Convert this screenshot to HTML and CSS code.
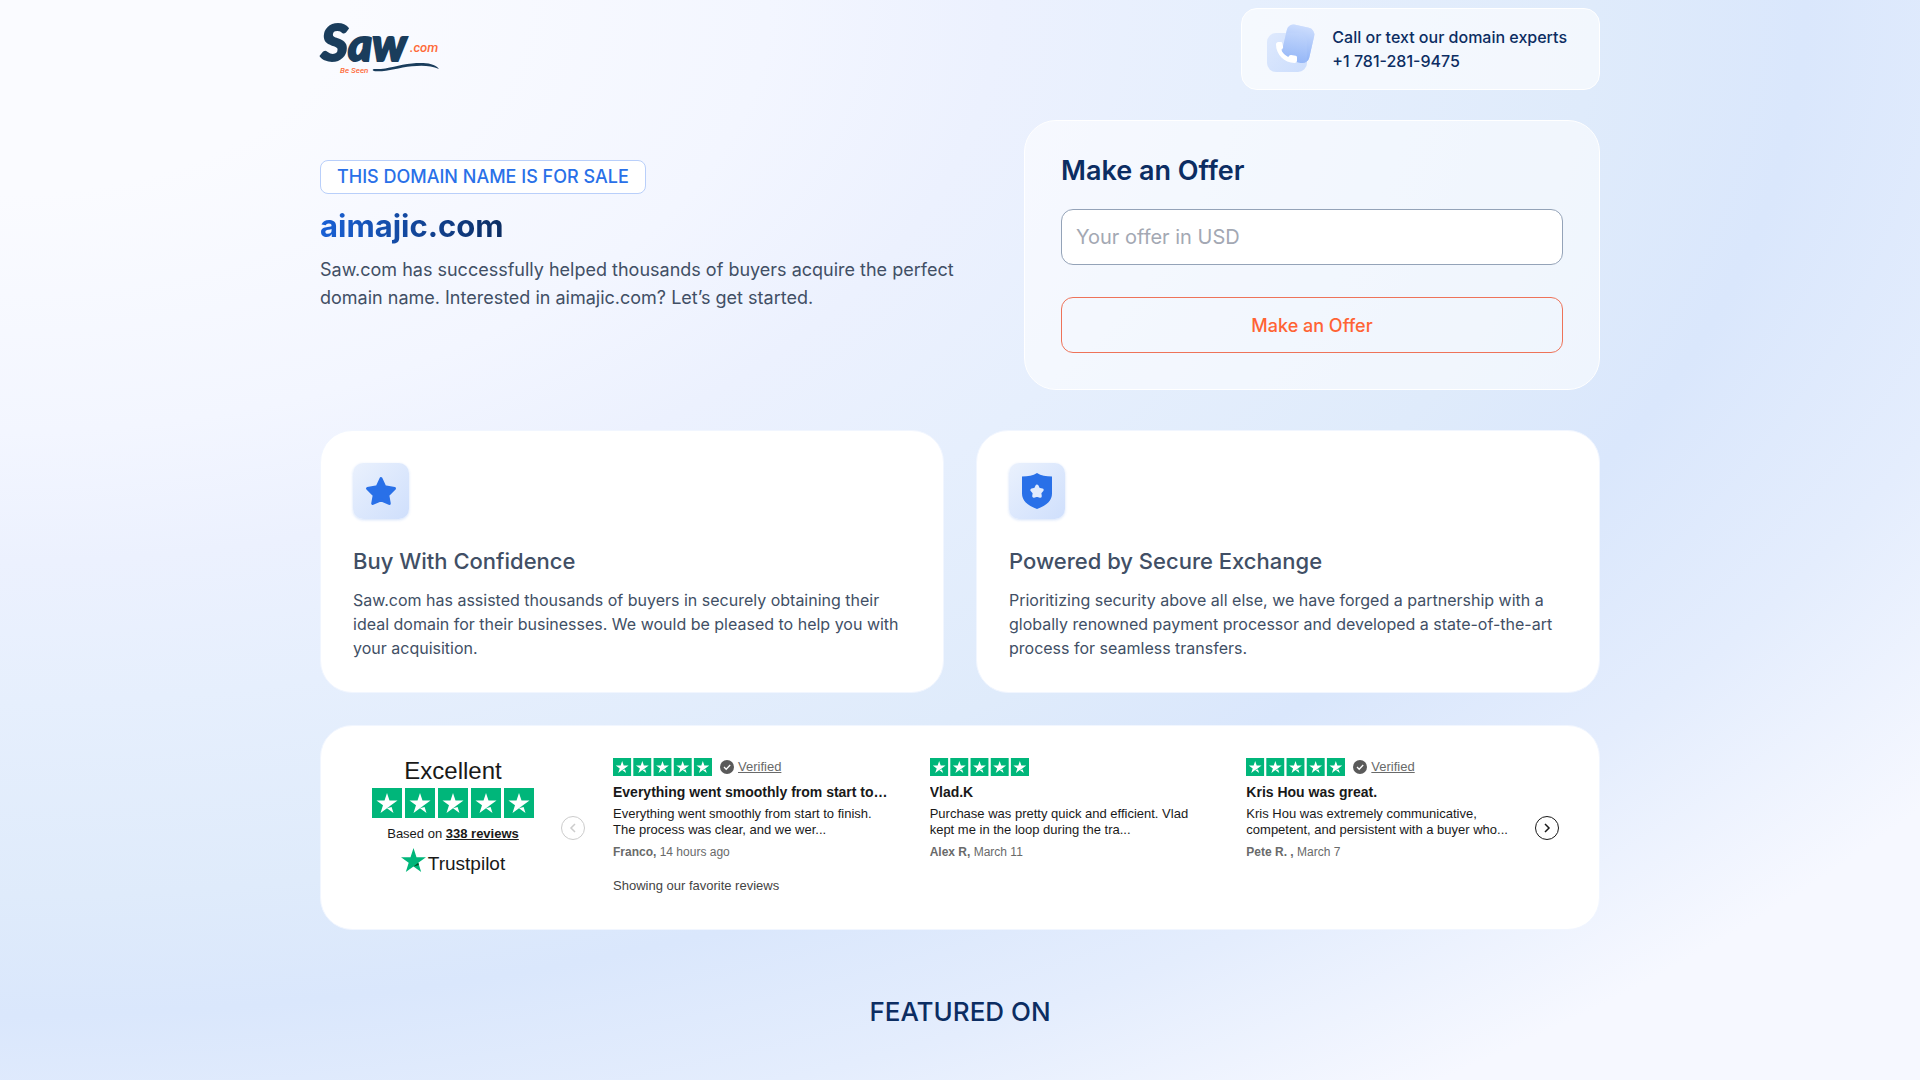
FILE: index.html
```html
<!DOCTYPE html>
<html lang="en">

<head>
    <meta charset="UTF-8">
    <meta name="viewport" content="width=device-width, initial-scale=1">
    <title>aimajic.com is for sale | Saw.com</title>
    <link rel="stylesheet" href="styles.css">
</head>

<body>
    <!-- shared shapes -->
    <svg class="sprite" aria-hidden="true">
        <symbol id="tp-star" viewBox="0 0 30 30">
            <rect width="30" height="30" fill="#00b67a" />
            <path fill="#fff" d="M15 20.2l4.6-1.2 1.9 5.9zM25.5 12.6h-8L15 5l-2.5 7.6h-8l6.5 4.7-2.5 7.6 6.5-4.7 4-2.9z" />
        </symbol>
        <symbol id="tp-stars" viewBox="0 0 162 30">
            <use href="#tp-star" width="30" height="30" />
            <use href="#tp-star" x="33" width="30" height="30" />
            <use href="#tp-star" x="66" width="30" height="30" />
            <use href="#tp-star" x="99" width="30" height="30" />
            <use href="#tp-star" x="132" width="30" height="30" />
        </symbol>
        <symbol id="verified" viewBox="0 0 14 14">
            <circle cx="7" cy="7" r="7" fill="#5a5a5a" />
            <path d="M4 7l2.2 2.2L10.2 5" fill="none" stroke="#fff" stroke-width="1.3" />
        </symbol>
    </svg>

    <div class="container">
        <header class="header">
            <a href="#" class="logo" aria-label="Saw.com">
                <svg width="120" height="52" viewBox="0 0 120 52">
                    <text x="1" y="38" class="logo-saw"><tspan class="logo-s">S</tspan>aw</text>
                    <text x="90" y="29" class="logo-com">.com</text>
                    <text x="20" y="50" class="logo-tag">Be Seen</text>
                    <path fill="#1a3d5c" d="M54 46c14 .6 24-4.700 38-5.600 11-.6 22-.8 27 5.600-8-3.600-17-3.800-27-2.800-14 1.400-25 5.800-37 5-2.500-.2-3-1.800-1-2.200z" />
                </svg>
            </a>
            <a href="tel:+17812819475" class="phone-card">
                <svg width="56" height="56" viewBox="0 0 56 56" aria-hidden="true">
                    <defs>
                        <linearGradient id="backTile" x1="0" y1="0" x2="0" y2="1">
                            <stop offset="0" stop-color="#cbdcfd" />
                            <stop offset="1" stop-color="#8db1f6" />
                        </linearGradient>
                        <linearGradient id="frontTile" x1="0" y1="0" x2="1" y2="1">
                            <stop offset="0" stop-color="#d5e3fd" stop-opacity=".7" />
                            <stop offset="1" stop-color="#b2ccfb" stop-opacity=".6" />
                        </linearGradient>
                    </defs>
                    <rect x="22" y="5" width="28" height="36" rx="7" fill="url(#backTile)" transform="rotate(13 37 23)" />
                    <rect x="5" y="12" width="40" height="39" rx="9" fill="url(#frontTile)" />
                    <path fill="url(#backTile)" opacity=".7" transform="rotate(13 37 23)" d="M22 12a7 7 0 017-7h14a7 7 0 017 7v22a7 7 0 01-7 7H29a7 7 0 01-7-7z" />
                    <path fill="#fff" d="M14 23.500c0-1.500 1-2.500 2.400-2.500h2.300c.8 0 1.400.5 1.600 1.300l.8 3.600c.1.700-.1 1.300-.6 1.700l-1.500 1.200c1.700 3.200 4 5.500 7.200 7.200l1.200-1.500c.4-.5 1-.7 1.700-.6l4.600.9c.8.200 1.300.8 1.300 1.600v3.200c0 1.400-1 2.400-2.500 2.400C22.500 42 14 33.500 14 23.500z" />
                </svg>
                <span>Call or text our domain experts<br>+1 781-281-9475</span>
            </a>
        </header>

        <section class="hero">
            <div class="hero-text">
                <span class="badge">THIS DOMAIN NAME IS FOR SALE</span>
                <h1><span>aimajic.com</span></h1>
                <p>Saw.com has successfully helped thousands of buyers acquire the perfect domain name. Interested in aimajic.com? Let’s get started.</p>
            </div>
            <form class="offer-card">
                <h2><label for="offer">Make an Offer</label></h2>
                <input type="text" id="offer" placeholder="Your offer in USD">
                <button type="button">Make an Offer</button>
            </form>
        </section>

        <section class="features">
            <div class="card">
                <div class="icon-tile">
                    <svg width="56" height="56" viewBox="0 0 56 56" aria-hidden="true">
                        <path fill="#2970e8" stroke="#2970e8" stroke-width="3" stroke-linejoin="round" d="M28 15.500l3.700 8.200 9.800 1.800-6.700 6.800 1.500 8.200-8.300-3.700-8.300 3.700 1.500-8.200-6.700-6.800 9.800-1.800z" />
                    </svg>
                </div>
                <h3>Buy With Confidence</h3>
                <p>Saw.com has assisted thousands of buyers in securely obtaining their ideal domain for their businesses. We would be pleased to help you with your acquisition.</p>
            </div>
            <div class="card">
                <div class="icon-tile">
                    <svg width="56" height="56" viewBox="0 0 56 56" aria-hidden="true">
                        <path fill="#2970e8" d="M28 10c4 2.700 9 3.500 15 3.500v17c0 7-5 11.500-15 15.500-10-4-15-8.500-15-15.500v-17c6 0 11-.8 15-3.500z" />
                        <path fill="#e1ebfd" stroke="#e1ebfd" stroke-width="3" stroke-linejoin="round" d="M28 23l1.600 3.200 3.600.8-2.400 2.700.5 3.500-3.300-.9-3.300.9.5-3.500-2.400-2.700 3.600-.8z" />
                    </svg>
                </div>
                <h3>Powered by Secure Exchange</h3>
                <p>Prioritizing security above all else, we have forged a partnership with a globally renowned payment processor and developed a state-of-the-art process for seamless transfers.</p>
            </div>
        </section>

        <section class="card reviews">
            <div class="summary">
                <div class="rating">Excellent</div>
                <svg class="stars-big" width="162" height="30" role="img" aria-label="5 stars"><use href="#tp-stars" /></svg>
                <div class="based-on">Based on <a href="#">338 reviews</a></div>
                <a href="#" class="trustpilot">
                    <svg width="25" height="24" viewBox="0 0 25 24" aria-hidden="true">
                        <path fill="#00b67a" d="M25 9.200h-9.500L12.500 0l-3 9.200H0l7.700 5.600L4.800 24l7.700-5.600 7.700 5.600-2.900-9.200z" />
                        <path fill="#005128" d="M17.900 16.900l-.6-2.100-4.800 3.600z" />
                    </svg>
                    Trustpilot
                </a>
            </div>
            <button type="button" class="arrow prev" aria-label="Previous reviews" disabled>
                <svg width="24" height="24" viewBox="0 0 24 24"><path d="M14 8l-4 4 4 4" /></svg>
            </button>
            <div class="review-list">
                <article class="review">
                    <div class="review-top">
                        <svg width="99" height="18" viewBox="0 0 162 30" preserveAspectRatio="none" role="img" aria-label="5 stars"><use href="#tp-stars" width="162" height="30" /></svg>
                        <svg class="check" width="14" height="14"><use href="#verified" /></svg>
                        <a href="#">Verified</a>
                    </div>
                    <h4>Everything went smoothly from start to…</h4>
                    <p>Everything went smoothly from start to finish. The process was clear, and we wer...</p>
                    <div class="author"><b>Franco,</b> 14 hours ago</div>
                </article>
                <article class="review">
                    <div class="review-top">
                        <svg width="99" height="18" viewBox="0 0 162 30" preserveAspectRatio="none" role="img" aria-label="5 stars"><use href="#tp-stars" width="162" height="30" /></svg>
                    </div>
                    <h4>Vlad.K</h4>
                    <p>Purchase was pretty quick and efficient. Vlad kept me in the loop during the tra...</p>
                    <div class="author"><b>Alex R,</b> March 11</div>
                </article>
                <article class="review">
                    <div class="review-top">
                        <svg width="99" height="18" viewBox="0 0 162 30" preserveAspectRatio="none" role="img" aria-label="5 stars"><use href="#tp-stars" width="162" height="30" /></svg>
                        <svg class="check" width="14" height="14"><use href="#verified" /></svg>
                        <a href="#">Verified</a>
                    </div>
                    <h4>Kris Hou was great.</h4>
                    <p>Kris Hou was extremely communicative, competent, and persistent with a buyer who...</p>
                    <div class="author"><b>Pete R. ,</b> March 7</div>
                </article>
                <div class="showing">Showing our favorite reviews</div>
            </div>
            <button type="button" class="arrow" aria-label="Next reviews">
                <svg width="24" height="24" viewBox="0 0 24 24"><path d="M10 8l4 4-4 4" /></svg>
            </button>
        </section>

        <h2 class="featured">FEATURED ON</h2>
    </div>
</body>

</html>
```

FILE: styles.css
```css
* {
    box-sizing: border-box;
}

body {
    margin: 0;
    min-height: 100vh;
    font-family: Inter, sans-serif;
    font-size: 16px;
    line-height: 24px;
    color: #414f65;
    background: radial-gradient(ellipse 100vw 100vh at 0 0, #fafbff 18%, #f3f6ff 40%, #ecf1fe 52%, #e6effd 65%, #dfebfb 83%, #dae7fc 94%, #e4edfd 108%, #f6f8ff 125%);
}

h1, h2, h3, h4, p {
    margin: 0;
}

.sprite {
    position: absolute;
    width: 0;
    height: 0;
}

.container {
    max-width: 1312px;
    margin: 0 auto;
    padding: 8px 16px 48px;
}

.header {
    display: flex;
    align-items: center;
    justify-content: space-between;
    margin-bottom: 30px;
}

.logo svg {
    display: block;
    overflow: visible;
}

.logo-saw {
    font: italic 900 46px Lato, sans-serif;
    fill: #1a3d5c;
    stroke: #1a3d5c;
    stroke-width: 2px;
}

.logo-s {
    font-size: 52px;
}

.logo-com {
    font: italic 500 13px Roboto, sans-serif;
    fill: #ff6a39;
}

.logo-tag {
    font: italic 500 8px Roboto, sans-serif;
    fill: #ff6a39;
}

.phone-card {
    display: flex;
    align-items: center;
    gap: 14px;
    padding: 12px 32px 12px 20px;
    border: 1px solid #fff;
    border-radius: 16px;
    background: rgba(255, 255, 255, 0.6);
    color: #0c2d62;
    font-weight: 500;
    text-decoration: none;
}

.hero {
    display: grid;
    grid-template-columns: 10fr 9fr;
    gap: 64px;
    margin-bottom: 40px;
}

.hero-text {
    padding-top: 40px;
    font-size: 18px;
    line-height: 28px;
}

.badge {
    display: inline-block;
    padding: 4px 16px;
    border: 1px solid #b9cffa;
    border-radius: 8px;
    background: #fff;
    color: #2970e8;
    font-weight: 500;
    line-height: 24px;
}

.hero-text h1 {
    margin: 12px 0 10px;
    font-size: 31px;
    line-height: 40px;
}

.hero-text h1 span {
    background: linear-gradient(90deg, #1a61d6, #0c2d62);
    background-clip: text;
    -webkit-background-clip: text;
    color: transparent;
}

.offer-card {
    display: flex;
    flex-direction: column;
    padding: 36px;
    border: 1px solid #fff;
    border-radius: 32px;
    background: rgba(255, 255, 255, 0.55);
}

.offer-card h2 {
    margin-bottom: 24px;
    font-size: 27px;
    font-weight: 600;
    line-height: 28px;
    color: #0c2d62;
}

.offer-card input {
    height: 56px;
    margin-bottom: 32px;
    padding: 0 14px;
    border: 1px solid #94a3b8;
    border-radius: 12px;
    background: #fff;
    font-family: inherit;
    font-size: 20px;
}

.offer-card input::placeholder {
    color: #a3a8b3;
}

.offer-card button {
    height: 56px;
    border: 1px solid #ee7359;
    border-radius: 12px;
    background: transparent;
    color: #ff6334;
    font-family: inherit;
    font-size: 18px;
    font-weight: 500;
    cursor: pointer;
}

.features {
    display: grid;
    grid-template-columns: 1fr 1fr;
    gap: 32px;
    margin-bottom: 32px;
}

.card {
    padding: 32px;
    border: 1px solid #f1f6ff;
    border-radius: 32px;
    background: #fff;
}

.icon-tile {
    width: 56px;
    height: 56px;
    margin-bottom: 24px;
    border-radius: 10px;
    background: linear-gradient(135deg, #eaf1fd, #cfdffc);
    box-shadow: 0 1px 3px rgba(41, 112, 232, 0.2);
}

.card h3 {
    margin-bottom: 9px;
    font-size: 22px;
    font-weight: 500;
    line-height: 36px;
}

.reviews {
    display: flex;
    padding: 32px 40px 32px 32px;
    font-family: "Liberation Sans", Arial, sans-serif;
    font-size: 13px;
    line-height: 16px;
    color: #191919;
}

.summary {
    width: 200px;
    margin-right: 8px;
    text-align: center;
}

.rating {
    font-size: 24px;
    line-height: 26px;
    margin-bottom: 4px;
}

.stars-big {
    display: block;
    margin: 0 auto 8px;
}

.based-on a {
    color: inherit;
    font-weight: bold;
}

.trustpilot {
    display: flex;
    justify-content: center;
    gap: 2px;
    margin-top: 6px;
    color: #191919;
    font-size: 19px;
    line-height: 32px;
    text-decoration: none;
}

.arrow {
    flex: none;
    align-self: center;
    width: 24px;
    height: 24px;
    padding: 0;
    border: 1px solid #191919;
    border-radius: 50%;
    background: none;
    cursor: pointer;
}

.arrow svg {
    display: block;
    margin: -1px;
    fill: none;
    stroke: #191919;
    stroke-width: 1.5;
}

.arrow.prev {
    margin-right: 28px;
    border-color: #ccc;
}

.arrow.prev svg {
    stroke: #ccc;
}

.review-list {
    flex: 1;
    display: grid;
    grid-template-columns: repeat(3, 1fr);
    column-gap: 36px;
    margin-right: 8px;
}

.review-top {
    display: flex;
    align-items: center;
    height: 18px;
    margin-bottom: 8px;
}

.review-top a {
    color: #696a6a;
}

.check {
    margin: 0 4px 0 8px;
}

.review h4 {
    margin-bottom: 6px;
    overflow: hidden;
    font-size: 14px;
    text-overflow: ellipsis;
    white-space: nowrap;
}

.author {
    margin-top: 6px;
    font-size: 12px;
    color: #696a6a;
}

.showing {
    grid-column: 1 / -1;
    margin-top: 18px;
    padding-bottom: 3px;
    color: #444;
}

.featured {
    margin-top: 64px;
    font-size: 26px;
    font-weight: 500;
    line-height: 36px;
    text-align: center;
    color: #0c2d62;
}

@media (max-width: 1000px) {
    .hero,
    .features {
        grid-template-columns: 1fr;
    }

    .reviews {
        flex-wrap: wrap;
    }
}
```
